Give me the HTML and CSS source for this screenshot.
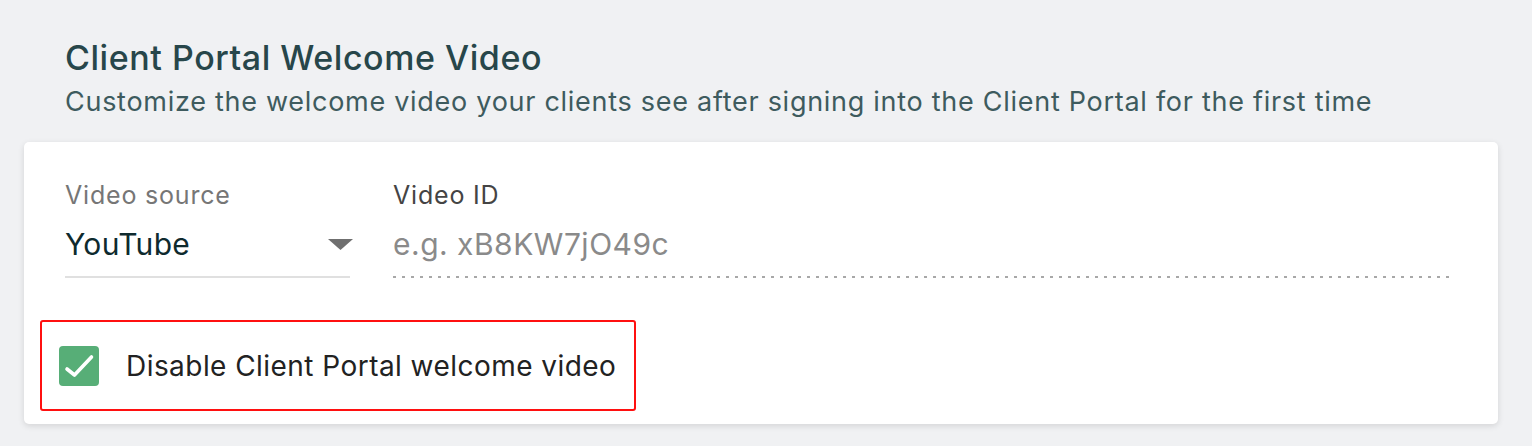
FILE: index.html
```html
<!DOCTYPE html>
<html lang="en">

<head>
  <meta charset="UTF-8">
  <meta name="viewport" content="width=device-width, initial-scale=1.0">
  <title>Client Portal Welcome Video</title>
  <link rel="stylesheet" href="styles.css">
</head>

<body>
  <div class="section-header">
    <h2>Client Portal Welcome Video</h2>
    <p>Customize the welcome video your clients see after signing into the Client Portal for the first time</p>
  </div>

  <div class="card">
    <div class="fields">
      <div class="field field-select">
        <label for="videoSource">Video source</label>
        <div class="select-box">
          <span id="videoSource">YouTube</span>
          <svg class="caret" width="25" height="11" viewBox="0 0 25 11">
            <path d="M0 0 L25 0 L12.5 11 Z" fill="#6f6f6f" />
          </svg>
        </div>
      </div>
      <div class="field field-input">
        <label for="videoId">Video ID</label>
        <input type="text" id="videoId" placeholder="e.g. xB8KW7jO49c">
      </div>
    </div>

    <div class="check-row">
      <span class="checkbox">
        <svg width="40" height="40" viewBox="0 0 40 40">
          <path d="M8 23 L15.5 29 L32.5 11" fill="none" stroke="#fff" stroke-width="3.6" stroke-linecap="round" stroke-linejoin="round" />
        </svg>
      </span>
      <span class="check-label">Disable Client Portal welcome video</span>
    </div>
  </div>
</body>

</html>
```

FILE: styles.css
```css
body {
  margin: 0;
  background-color: #f0f1f3;
  font-family: Inter, "Noto Sans", Arial, sans-serif;
  width: 1532px;
  height: 446px;
  overflow: hidden;
}

.section-header {
  padding: 37px 0 0 65px;
}

.section-header h2 {
  margin: 0;
  font-size: 34px;
  font-weight: 500;
  line-height: 42px;
  letter-spacing: 0.55px;
  color: #27464a;
}

.section-header p {
  margin: 6px 0 0;
  font-size: 27px;
  line-height: 34px;
  color: #3e5b5e;
  letter-spacing: 0.72px;
}

.card {
  margin: 23px 34px 0 24px;
  height: 282px;
  box-sizing: border-box;
  background: #fff;
  border-radius: 5px;
  box-shadow: 0 2px 6px rgba(0, 0, 0, 0.12);
  padding: 38px 45px 0 16px;
}

.fields {
  display: flex;
  gap: 43px;
  padding-left: 25px;
}

.field label {
  display: block;
  font-size: 25px;
  line-height: 30px;
  letter-spacing: 0.8px;
}

.field-select {
  width: 285px;
}

.field-select label {
  color: #767676;
}

.select-box {
  display: flex;
  align-items: center;
  justify-content: space-between;
  margin-top: 2px;
  height: 64px;
  border-bottom: 2px solid #e0e0e0;
  font-size: 30px;
  letter-spacing: 0.3px;
  color: #0e2a2e;
}

.caret {
  margin-right: -3px;
}

.field-input {
  flex: 1;
}

.field-input label {
  color: #444;
}

.field-input input {
  display: block;
  width: 100%;
  box-sizing: border-box;
  margin-top: 2px;
  height: 66px;
  border: none;
  padding: 0 0 2px;
  font-family: inherit;
  font-size: 30px;
  letter-spacing: 0.5px;
  color: #222;
  outline: none;
  background: linear-gradient(to right, #a8a8a8 3px, transparent 3px) left bottom / 9px 2px repeat-x;
}

.field-input input::placeholder {
  color: #8a8a8a;
}

.check-row {
  display: inline-flex;
  align-items: center;
  gap: 27px;
  margin-top: 42px;
  width: 596px;
  height: 91px;
  box-sizing: border-box;
  border: 2px solid #ff1010;
  border-radius: 3px;
  padding-left: 17px;
}

.checkbox {
  width: 40px;
  height: 40px;
  border-radius: 4px;
  background: #57ae77;
  display: flex;
}

.check-label {
  font-size: 28px;
  letter-spacing: 0.45px;
  color: #222;
}
```
